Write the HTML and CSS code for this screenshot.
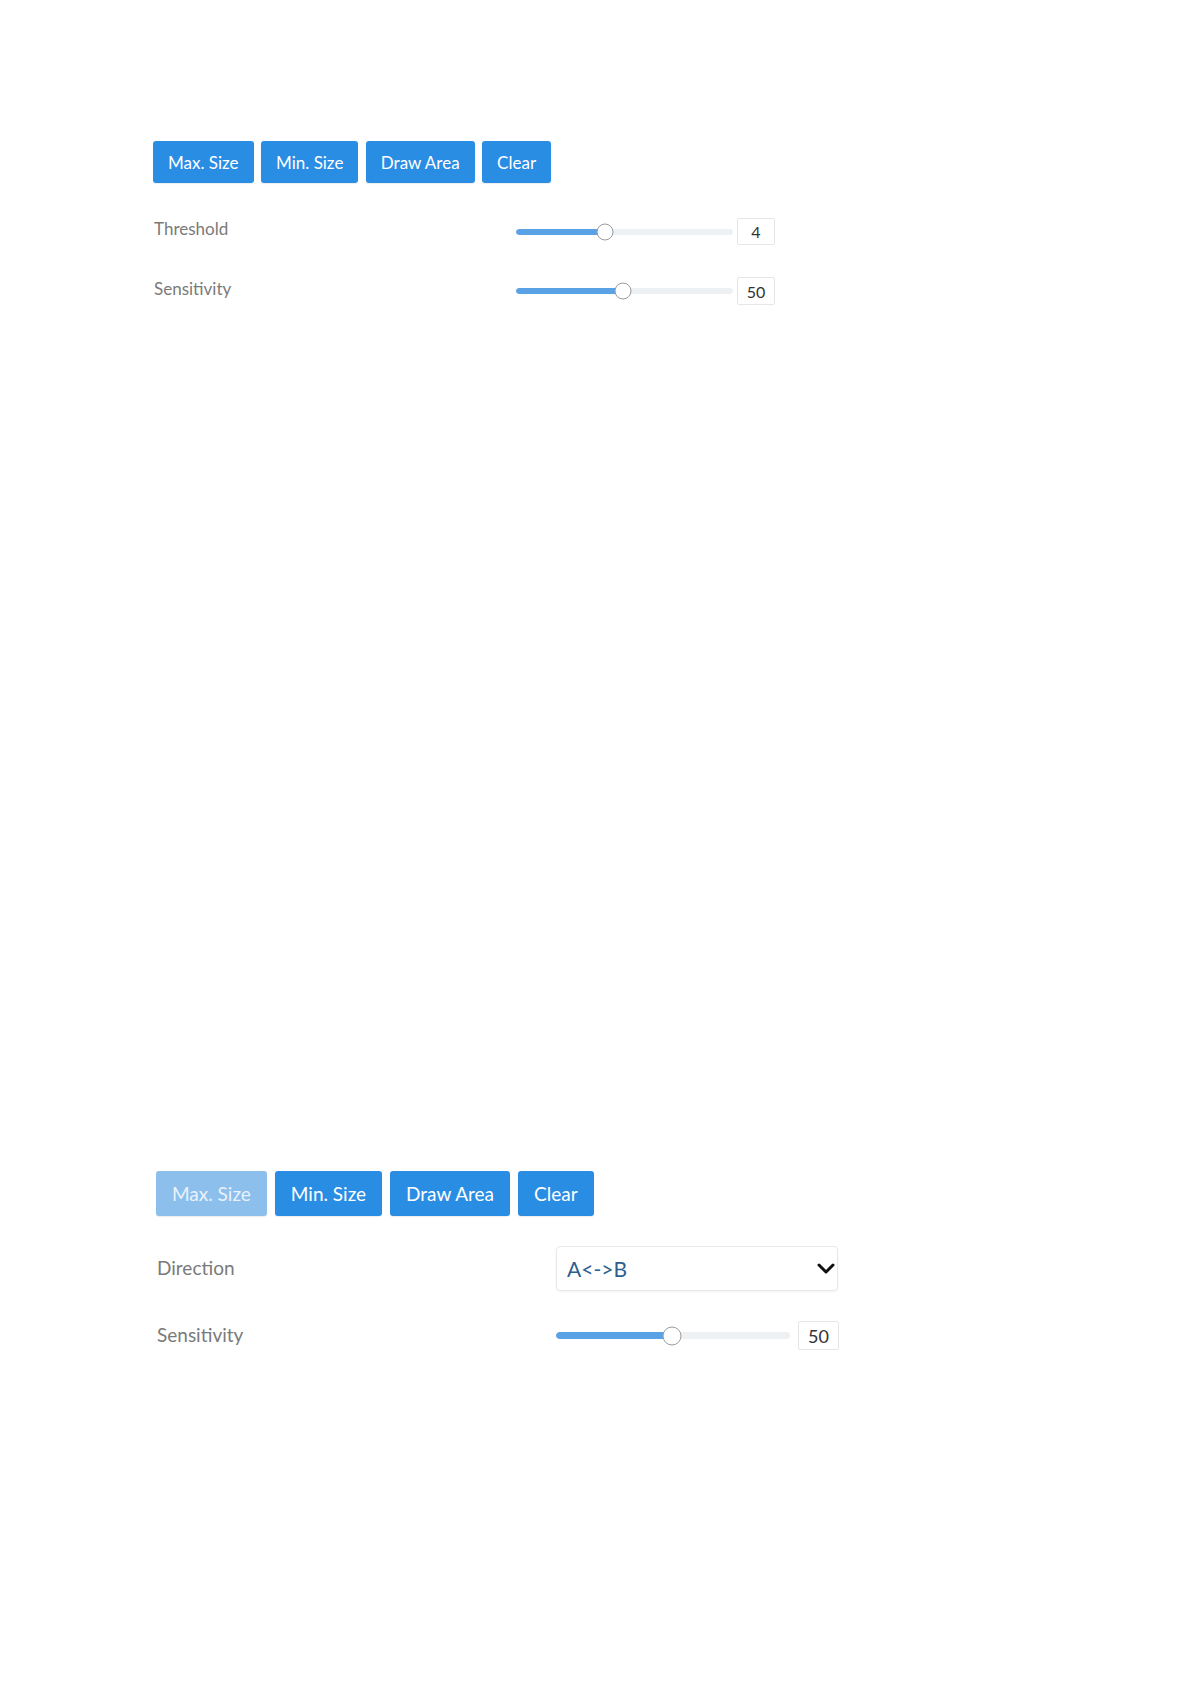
FILE: index.html
```html
<!DOCTYPE html>
<html lang="en">
<head>
<meta charset="utf-8">
<title>Detection settings</title>
<link rel="stylesheet" href="styles.css">
</head>
<body>
<div class="page">
  <section class="panel panel-a">
    <div class="btn-row">
      <button class="btn">Max. Size</button>
      <button class="btn">Min. Size</button>
      <button class="btn">Draw Area</button>
      <button class="btn">Clear</button>
    </div>
    <div class="field first">
      <div class="label">Threshold</div>
      <div class="control">
        <div class="slider">
          <div class="track"><div class="fill" style="width:41%"></div></div>
          <div class="thumb" style="left:41%"></div>
        </div>
        <div class="num">4</div>
      </div>
    </div>
    <div class="field second">
      <div class="label">Sensitivity</div>
      <div class="control">
        <div class="slider">
          <div class="track"><div class="fill" style="width:49.3%"></div></div>
          <div class="thumb" style="left:49.3%"></div>
        </div>
        <div class="num">50</div>
      </div>
    </div>
  </section>

  <section class="panel panel-b">
    <div class="btn-row">
      <button class="btn disabled">Max. Size</button>
      <button class="btn">Min. Size</button>
      <button class="btn">Draw Area</button>
      <button class="btn">Clear</button>
    </div>
    <div class="field first">
      <div class="label">Direction</div>
      <div class="control">
        <div class="select">
          <span class="select-value">A&lt;-&gt;B</span>
          <svg class="chevron" width="18" height="11" viewBox="0 0 18 11"><path d="M2 2 L9 9 L16 2" fill="none" stroke="#111" stroke-width="3" stroke-linecap="round" stroke-linejoin="round"/></svg>
        </div>
      </div>
    </div>
    <div class="field second">
      <div class="label">Sensitivity</div>
      <div class="control">
        <div class="slider">
          <div class="track"><div class="fill" style="width:49.6%"></div></div>
          <div class="thumb" style="left:49.6%"></div>
        </div>
        <div class="num">50</div>
      </div>
    </div>
  </section>
</div>
</body>
</html>
```

FILE: styles.css
```css
* { box-sizing: border-box; }

html, body {
  margin: 0;
  padding: 0;
  background: #ffffff;
}

body {
  font-family: Lato, "Open Sans", "Liberation Sans", sans-serif;
  width: 1190px;
  height: 1684px;
  overflow: hidden;
}

.page {
  display: flex;
  flex-direction: column;
}

.panel { display: flex; flex-direction: column; }

.btn-row {
  display: flex;
}

.btn {
  font-family: Lato, "Open Sans", "Liberation Sans", sans-serif;
  background: #2a8de4;
  color: #ffffff;
  border: none;
  border-radius: 3px;
  margin: 0;
  cursor: pointer;
  box-shadow: 0 1px 1px rgba(0,0,0,0.08);
}

.btn.disabled {
  background: #8cbfec;
  color: #e8f2fc;
}

.field {
  display: flex;
  align-items: center;
}

.label {
  color: #7a7a7a;
  flex: none;
}

.control {
  display: flex;
  align-items: center;
  height: 100%;
}

.slider {
  position: relative;
  display: flex;
  align-items: center;
}

.track {
  width: 100%;
  background: #eef1f4;
  border-radius: 4px;
  overflow: hidden;
}

.fill {
  height: 100%;
  background: #5aa2e6;
  border-radius: 4px;
}

.thumb {
  position: absolute;
  top: 50%;
  transform: translate(-50%, -50%);
  background: #ffffff;
  border: 1px solid #9a9a9a;
  border-radius: 50%;
}

.num {
  border: 1px solid #e6e6e6;
  border-radius: 2px;
  color: #333333;
  display: flex;
  align-items: center;
  justify-content: center;
  background: #fff;
  height: 100%;
}

/* ---------- panel A (top) ---------- */
.panel-a {
  margin-top: 141px;
  margin-left: 153px;
}
.panel-a .btn-row { gap: 7.5px; }
.panel-a .btn {
  height: 42px;
  font-size: 17px;
  padding: 0 15px;
}
.panel-a .field.first { margin-top: 35px; height: 27px; }
.panel-a .field.second { margin-top: 32px; height: 28px; }
.panel-a .label { width: 363px; font-size: 17px; padding: 0 0 6px 1px; }
.panel-a .slider { width: 217px; height: 18px; }
.panel-a .track { height: 6px; }
.panel-a .thumb { width: 17px; height: 17px; }
.panel-a .num { width: 38px; margin-left: 4px; font-size: 16px; }

/* ---------- panel B (bottom) ---------- */
.panel-b {
  margin-top: 866px;
  margin-left: 156px;
}
.panel-b .btn-row { gap: 8px; }
.panel-b .btn {
  height: 45px;
  font-size: 19px;
  padding: 0 16px;
}
.panel-b .field.first { margin-top: 30px; height: 45px; }
.panel-b .field.second { margin-top: 30px; height: 29px; }
.panel-b .label { width: 400px; font-size: 19px; padding: 0 0 2px 1px; }
.panel-b .slider { width: 234px; height: 20px; }
.panel-b .track { height: 7px; }
.panel-b .thumb { width: 19px; height: 19px; }
.panel-b .num { width: 41px; margin-left: 8px; font-size: 18px; }

.select {
  width: 282px;
  height: 45px;
  border: 1px solid #e8e8e8;
  border-radius: 4px;
  box-shadow: 0 1px 2px rgba(0,0,0,0.05);
  display: flex;
  align-items: center;
  justify-content: space-between;
  padding: 0 2px 0 10px;
}

.select-value {
  font-size: 21px;
  color: #2c5e92;
}

.chevron { display: block; }
```
